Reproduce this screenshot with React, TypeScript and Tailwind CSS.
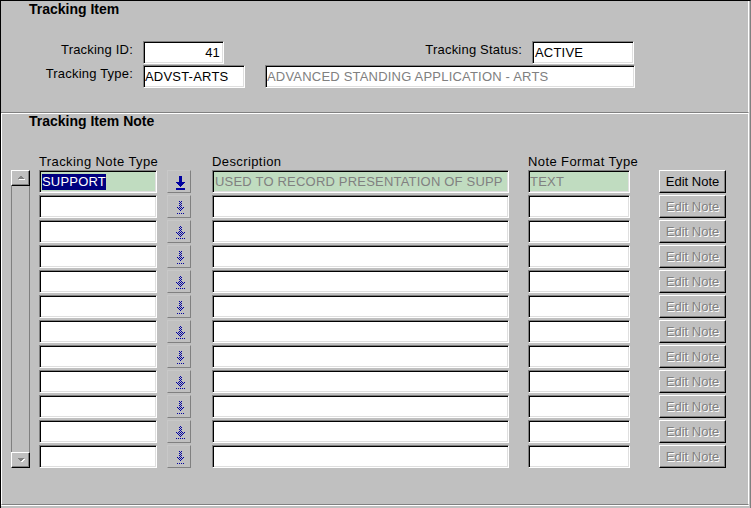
import React from 'react';

function Sunken({ className = '', children }: { className?: string; children?: React.ReactNode }) {
  return (
    <div
      className={`h-[23px] shrink-0 border border-t-[#808080] border-l-[#808080] border-b-white border-r-white shadow-[inset_1px_1px_0_#000,inset_-1px_-1px_0_#dfdfdf] flex items-center overflow-hidden whitespace-nowrap text-[13px] leading-[15px] tracking-[0.2px] ${className}`}
    >
      {children}
    </div>
  );
}

const arrowPixels: [number, number][] = (() => {
  const px: [number, number][] = [];
  for (let y = 5; y <= 10; y++) for (let x = 11; x <= 13; x++) px.push([x, y]);
  const head = [
    [8, 16],
    [9, 15],
    [10, 14],
    [11, 13],
    [12, 12],
  ];
  head.forEach(([a, b], i) => {
    for (let x = a; x <= b; x++) px.push([x, 11 + i]);
  });
  for (let x = 8; x <= 16; x++) px.push([x, 17]);
  return px;
})();

function NavArrow({ enabled, row }: { enabled: boolean; row: number }) {
  const pts = enabled ? arrowPixels : arrowPixels.filter(([x, y]) => (x + y + row + 1) % 2 === 0);
  return (
    <div className="w-[24px] h-[23px] shrink-0 border border-t-[#c8c8c8] border-l-[#c8c8c8] border-b-[#808080] border-r-[#808080]">
      <svg className="block" width="22" height="21" viewBox="0 0 22 21" shapeRendering="crispEdges">
        {pts.map(([x, y]) => (
          <rect key={`${x}-${y}`} x={x} y={y} width="1" height="1" fill="#0000a0" />
        ))}
        {enabled && <rect x="8" y="18" width="9" height="1" fill="#0000a0" />}
      </svg>
    </div>
  );
}

function EditButton({ enabled }: { enabled: boolean }) {
  return (
    <div
      className={`w-[67px] h-[23px] shrink-0 border border-t-white border-l-white border-b-black border-r-black shadow-[inset_-1px_-1px_0_#808080] flex items-center justify-center text-[13px] leading-[15px] ${
        enabled ? 'text-black' : 'text-[#808080] [text-shadow:1px_1px_0_#ffffff]'
      }`}
    >
      Edit Note
    </div>
  );
}

function ScrollBtn({ up }: { up: boolean }) {
  return (
    <div className="h-[16px] w-[19px] shrink-0 border border-t-white border-l-white border-b-black border-r-black shadow-[inset_-1px_-1px_0_#808080] flex items-center justify-center">
      <svg className="block" width="9" height="6" viewBox="0 0 9 6" shapeRendering="crispEdges">
        {up ? (
          <>
            <polygon points="2,5 9,5 5.5,1.5" fill="#ffffff" />
            <polygon points="1,4 8,4 4.5,0.5" fill="#808080" />
          </>
        ) : (
          <>
            <polygon points="2,2 9,2 5.5,5.5" fill="#ffffff" />
            <polygon points="1,1 8,1 4.5,4.5" fill="#808080" />
          </>
        )}
      </svg>
    </div>
  );
}

export default function App() {
  const rows = Array.from({ length: 12 }, (_, i) => i);
  return (
    <div className="w-[751px] h-[508px] bg-[#c0c0c0] border-t border-l border-black border-r border-r-[#808080] flex flex-col pb-[2px] text-black font-['Liberation_Sans',Arial,sans-serif] overflow-hidden">
      {/* Tracking Item section */}
      <div className="h-[112px] shrink-0 border-b border-b-[#808080] border-r border-r-white mr-[1px] flex flex-col">
        <div className="ml-[28px] mt-[1px] text-[14px] leading-[14px] font-bold">Tracking Item</div>
        <div className="mt-[25px] flex items-start">
          <div className="w-[132px] text-right text-[13px] leading-[15px] tracking-[0.2px] mt-[1px]">Tracking ID:</div>
          <Sunken className="ml-[10px] w-[81px] bg-white justify-end pr-[3px]">41</Sunken>
          <div className="w-[298px] text-right text-[13px] leading-[15px] tracking-[0.2px] mt-[1px]">Tracking Status:</div>
          <Sunken className="ml-[10px] w-[102px] bg-white pl-[2px]">ACTIVE</Sunken>
        </div>
        <div className="mt-[1px] flex items-start">
          <div className="w-[132px] text-right text-[13px] leading-[15px] tracking-[0.2px] mt-[1px]">Tracking Type:</div>
          <Sunken className="ml-[10px] w-[102px] bg-white pl-[1px]">ADVST-ARTS</Sunken>
          <Sunken className="ml-[20px] w-[370px] bg-white pl-[1px] text-[#808080]">
            ADVANCED STANDING APPLICATION - ARTS
          </Sunken>
        </div>
      </div>

      {/* Tracking Item Note section */}
      <div className="flex-1 border-t border-t-white border-l border-l-white border-r border-r-white border-b border-b-[#808080] mr-[1px] flex flex-col">
        <div className="ml-[27px] text-[14px] leading-[14px] font-bold">Tracking Item Note</div>
        <div className="mt-[26px] flex text-[13px] leading-[15px] tracking-[0.4px] pl-[37px]">
          <div className="w-[173px]">Tracking Note Type</div>
          <div className="w-[316px]">Description</div>
          <div>Note Format Type</div>
        </div>
        <div className="mt-[1px] flex pl-[8px]">
          <div className="w-[20px] h-[298px] flex flex-col items-end">
            <ScrollBtn up />
            <div className="flex-1 w-[19px] border-l border-r border-[#808080]" />
            <ScrollBtn up={false} />
          </div>
          <div className="ml-[9px] flex flex-col gap-[2px]">
            {rows.map((i) => {
              const first = i === 0;
              return (
                <div key={i} className="flex">
                  <Sunken className={`w-[118px] pl-[2px] ${first ? 'bg-[#c0dcc0]' : 'bg-white'}`}>
                    {first && <span className="bg-[#000080] text-white leading-[16px]">SUPPORT</span>}
                  </Sunken>
                  <div className="ml-[10px]">
                    <NavArrow enabled={first} row={i} />
                  </div>
                  <Sunken className={`ml-[21px] w-[297px] pl-[2px] text-[#808080] ${first ? 'bg-[#c0dcc0]' : 'bg-white'}`}>
                    {first ? 'USED TO RECORD PRESENTATION OF SUPP' : ''}
                  </Sunken>
                  <Sunken className={`ml-[19px] w-[102px] pl-[1px] text-[#808080] ${first ? 'bg-[#c0dcc0]' : 'bg-white'}`}>
                    {first ? 'TEXT' : ''}
                  </Sunken>
                  <div className="ml-[29px]">
                    <EditButton enabled={first} />
                  </div>
                </div>
              );
            })}
          </div>
        </div>
      </div>
      <div className="h-[1px] bg-white mr-[1px]" />
    </div>
  );
}
